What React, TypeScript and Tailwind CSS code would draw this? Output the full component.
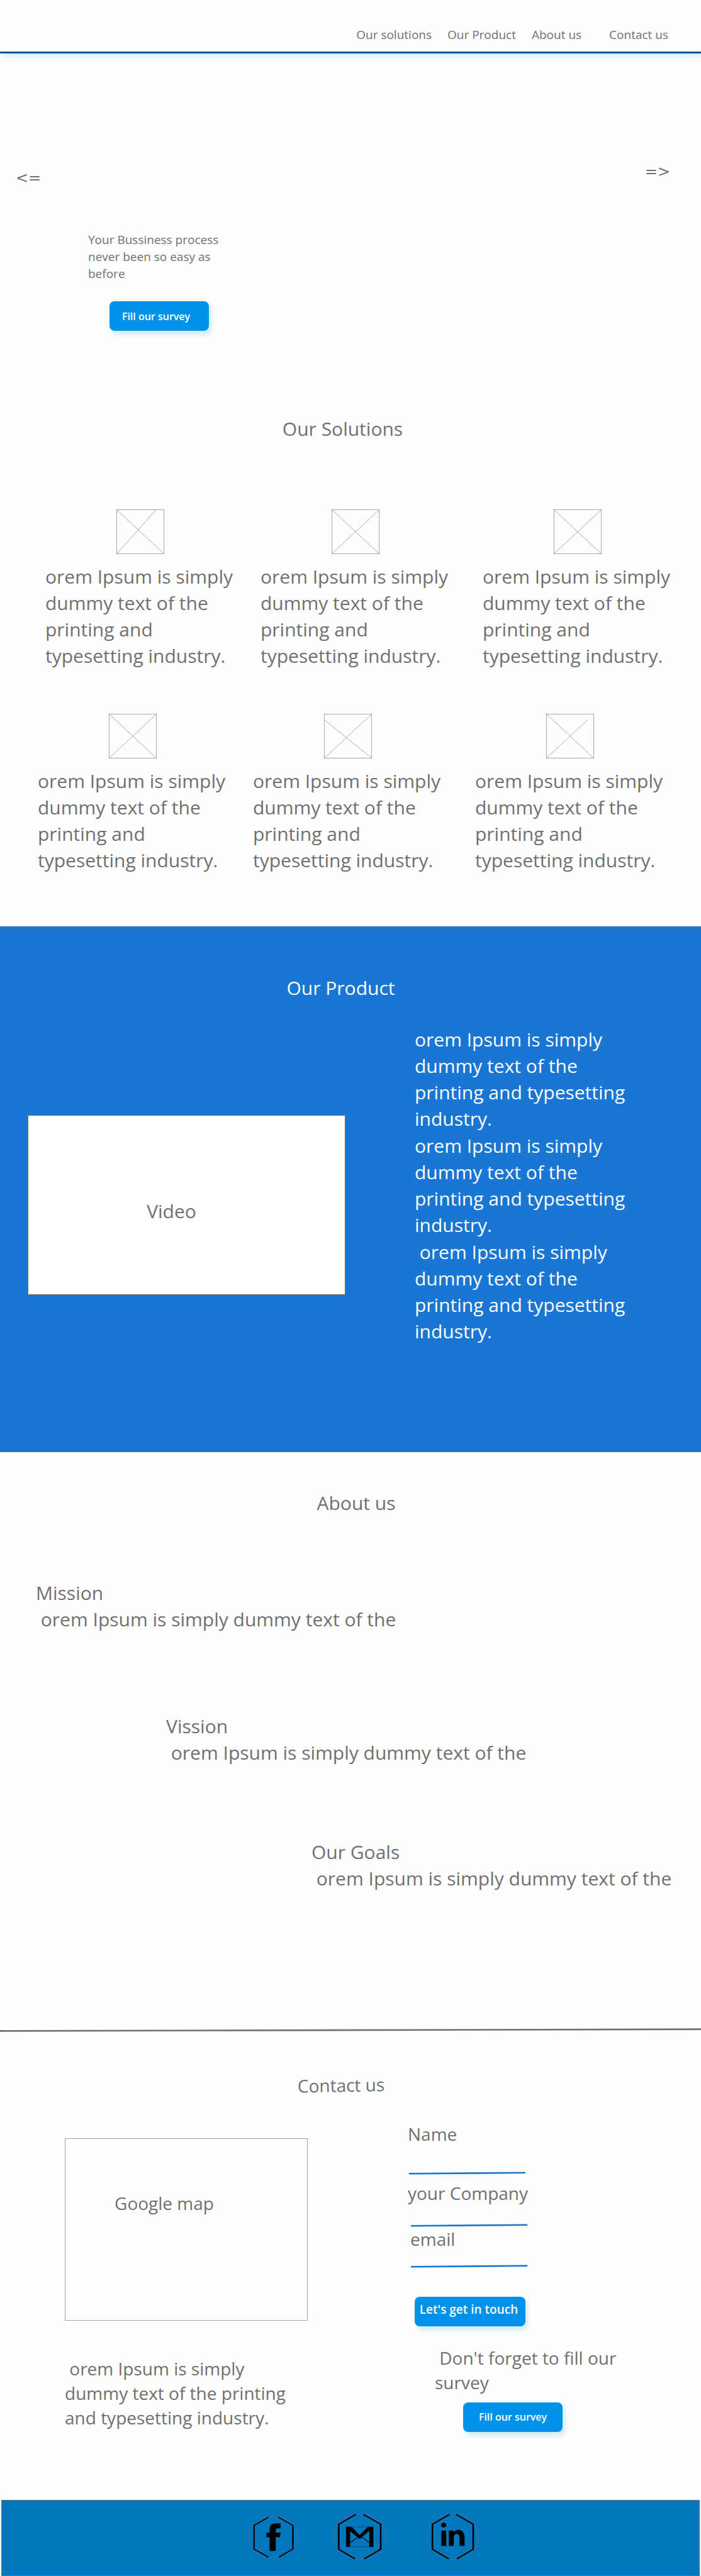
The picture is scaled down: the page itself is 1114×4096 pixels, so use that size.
import React from "react";

const LOREM = "orem Ipsum is simply dummy text of the printing and typesetting industry.";
const SHADOW = "shadow-[4px_6px_8px_rgba(0,145,234,0.18)]";

function SectionTitle({ className, children }: { className: string; children: React.ReactNode }) {
  return <h2 className={`text-center text-[30px] leading-[42px] ${className}`}>{children}</h2>;
}

const CROSS = "M0.5 0.5 75.5 70.5M0.5 70.5 75.5 0.5";

function Placeholder({ cross }: { cross: string }) {
  return (
    <svg className="ml-[113px] h-[71px] w-[76px]" viewBox="0 0 76 71" fill="none" stroke="#707070" strokeWidth="0.6" aria-hidden="true">
      <rect x="0.5" y="0.5" width="75" height="70" />
      <path d={cross} />
    </svg>
  );
}

function SolutionRow({ className, crosses }: { className: string; crosses: string[] }) {
  return (
    <div className={`grid grid-cols-[342fr_353fr_347fr] ${className}`}>
      {crosses.map((cross, i) => (
        <article key={i}>
          <Placeholder cross={cross} />
          <p className="mt-[15px] max-w-[310px] text-[30px] leading-[42px]">{LOREM}</p>
        </article>
      ))}
    </div>
  );
}

function AboutItem({ title, className }: { title: string; className: string }) {
  return (
    <article className={`text-[30px] leading-[42px] ${className}`}>
      <h3>{title}</h3>
      <p className="whitespace-pre">{" orem Ipsum is simply dummy text of the"}</p>
    </article>
  );
}

function SurveyButton({ className }: { className: string }) {
  return (
    <button
      type="button"
      className={`block h-[47px] w-[158px] rounded-lg bg-[#0091ea] text-[16px] font-semibold text-white ${SHADOW} ${className}`}
    >
      Fill our survey
    </button>
  );
}

function Field({
  id,
  label,
  type,
  className,
  inputClass,
  lineClass,
}: {
  id: string;
  label: string;
  type: string;
  className: string;
  inputClass: string;
  lineClass: string;
}) {
  return (
    <div className={className}>
      <label htmlFor={id} className="block text-[28px] leading-[39px]">
        {label}
      </label>
      <div className={`w-[185px] ${lineClass}`}>
        <input id={id} type={type} className={`block w-full bg-transparent text-base outline-none ${inputClass}`} />
        <svg className="block h-[5px] w-full" viewBox="0 0 185 5" preserveAspectRatio="none" aria-hidden="true">
          <path d="M0 3.2 185 1.8" stroke="#1976d2" strokeWidth="2.6" />
        </svg>
      </div>
    </div>
  );
}

function FacebookIcon() {
  return (
    <svg className="h-[66px] w-[79px]" viewBox="47 161 316 342" preserveAspectRatio="none" fill="none" aria-hidden="true">
      <ellipse cx="205" cy="332" rx="156" ry="170" stroke="#707070" strokeWidth="3" />
      <path d="M174 168 82 237V431L172 498M236 168 329 237V431L240 498" stroke="#000" strokeWidth="9" />
      <path
        d="M181 447V333H161V296H181V262Q181 219 219 219H250V261H232Q220 261 220 273V296H250L247 333H220V447Z"
        fill="#000"
      />
    </svg>
  );
}

function GmailIcon() {
  return (
    <svg className="h-[73px] w-[85px]" viewBox="581 143 338 379" preserveAspectRatio="none" fill="none" aria-hidden="true">
      <ellipse cx="750" cy="332.5" rx="167" ry="188" stroke="#707070" strokeWidth="3" />
      <path d="M727 148 618 230V437L721 516M774 148 883 230V437L779 516" stroke="#000" strokeWidth="10" />
      <path d="M664 249H699L750 320 803 249H837V417H811V284L750 352 690 287V417H664Z" fill="#000" />
      <path d="M690 382 740 334M812 382 762 334" stroke="#000" strokeWidth="5" />
      <path d="M690 252H811M690 416H811" stroke="#004a77" strokeWidth="5" />
    </svg>
  );
}

function LinkedInIcon() {
  return (
    <svg className="h-[73px] w-[83px]" viewBox="1171 143 333 379" preserveAspectRatio="none" fill="none" aria-hidden="true">
      <ellipse cx="1337.5" cy="332.5" rx="165" ry="188" stroke="#707070" strokeWidth="3" />
      <path d="M1317 148 1208 230V437L1312 516M1359 148 1468 230V437L1364 516" stroke="#000" strokeWidth="10" />
      <ellipse cx="1280" cy="237" rx="16" ry="20" fill="#000" />
      <path
        d="M1265 282H1296V409H1265ZM1313 282H1343V298Q1354 276 1374 276Q1412 280 1413 345V409H1381V340Q1380 309 1362 309Q1344 311 1344 345V409H1313Z"
        fill="#000"
      />
    </svg>
  );
}

export default function App() {
  return (
    <div className="w-full overflow-hidden bg-[#fefefe] font-['Open_Sans','Noto_Sans',sans-serif] text-[#707070]">
      <header className="flex justify-end border-b-[3px] border-[#01579b] pt-[42px] pr-[52px] pb-[13px] shadow-[4px_4px_8px_rgba(0,145,234,0.18)]">
        <nav className="flex gap-[25px] text-[19px] leading-[27px]">
          <a href="#solutions">Our solutions</a>
          <a href="#product">Our Product</a>
          <a href="#about">About us</a>
          <a href="#contact" className="ml-[19px]">
            Contact us
          </a>
        </nav>
      </header>

      <section className="pt-[173px]">
        <div className="flex items-start justify-between pr-[49px] pl-[25px] font-['DejaVu_Sans',sans-serif] text-[24px] leading-[30px]">
          <button type="button" aria-label="Previous slide" className="mt-[10px]">
            {"<="}
          </button>
          <button type="button" aria-label="Next slide">
            {"=>"}
          </button>
        </div>
        <p className="mt-[70px] ml-[140px] w-[220px] text-[19px] leading-[27px]">
          Your Bussiness process never been so easy as before
        </p>
        <SurveyButton className="mt-[30px] ml-[174px] pr-[10px]" />
      </section>

      <section id="solutions" className="pt-[135px] pb-[84px]">
        <SectionTitle className="pr-[25px]">Our Solutions</SectionTitle>
        <SolutionRow
          className="mt-[107px] pl-[72px]"
          crosses={["M0.5 0.5 75.5 70.5M0.5 70.5 63 0.5", CROSS, CROSS]}
        />
        <SolutionRow
          className="mt-[71px] pr-3 pl-[60px]"
          crosses={[CROSS, "M0.5 9.5 75.5 70.5M0.5 70.5 75.5 0.5", "M0.5 0.5 75.5 70.5M0.5 70.5 66 9.5"]}
        />
      </section>

      <section id="product" className="bg-[#1976d2] pt-[77px] pb-[171px] text-white">
        <SectionTitle className="pr-[31px]">Our Product</SectionTitle>
        <div className="mt-[40px] grid grid-cols-[505fr_455fr] items-start gap-[110px] pl-[44px]">
          <div className="mt-[141px] flex h-[286px] items-center justify-center border border-[#707070] bg-white pt-5 pr-[48px] text-[30px] leading-[42px] text-[#707070]">
            Video
          </div>
          <div className="flex max-w-[370px] flex-col gap-px text-[30px] leading-[42px] whitespace-pre-wrap">
            <p>{LOREM}</p>
            <p>{LOREM}</p>
            <p>{" " + LOREM}</p>
          </div>
        </div>
      </section>

      <section id="about" className="pt-[60px]">
        <SectionTitle className="pl-[18px]">About us</SectionTitle>
        <AboutItem title="Mission" className="mt-[101px] pl-[57px]" />
        <AboutItem title="Vission" className="mt-[128px] pl-[264px]" />
        <AboutItem title="Our Goals" className="mt-[116px] pl-[495px]" />
        <svg className="mt-[217px] block h-[6px] w-full" viewBox="0 0 1114 6" preserveAspectRatio="none" aria-hidden="true">
          <path d="M0 4.4 1114 1.6" stroke="#707070" strokeWidth="2.6" />
        </svg>
      </section>

      <section id="contact" className="pt-[65px] pb-[108px] text-[28px] leading-[39px]">
        <h2 className="-rotate-1 pr-[30px] text-center">Contact us</h2>
        <div className="mt-[39px] grid grid-cols-[386fr_466fr] gap-[159px] pl-[103px]">
          <div className="pt-[26px]">
            <div className="h-[290px] border border-[#a0a0a0] pt-[83px] pr-[70px] text-center">Google map</div>
            <p className="mt-[57px] max-w-[370px] whitespace-pre-wrap">{" " + LOREM}</p>
          </div>
          <div>
            <form>
              <Field id="name" label="Name" type="text" className="" inputClass="h-[40px]" lineClass="ml-[2px]" />
              <Field id="company" label="your Company" type="text" className="mt-[10px]" inputClass="h-[29px]" lineClass="ml-[5px]" />
              <Field id="email" label="email" type="email" className="pl-[4px]" inputClass="h-[21px]" lineClass="ml-[1px]" />
              <button
                type="submit"
                className={`mt-[46px] ml-[11px] block h-[47px] w-[176px] rounded-lg bg-[#0091ea] pr-[4px] pb-[7px] text-[19px] leading-[27px] font-semibold whitespace-nowrap text-white ${SHADOW}`}
              >
                Let's get in touch
              </button>
            </form>
            <p className="mt-[31px] ml-[43px] max-w-[310px] whitespace-pre-wrap">{" Don't forget to fill our survey"}</p>
            <SurveyButton className="mt-[12px] ml-[88px]" />
          </div>
        </div>
      </section>

      <footer className="mx-0.5 flex h-[121px] items-center justify-center gap-[55px] border border-[#707070] bg-[#0277bd] pb-1 pl-[42px]">
        <a href="#facebook" aria-label="Facebook">
          <FacebookIcon />
        </a>
        <a href="#gmail" aria-label="Gmail">
          <GmailIcon />
        </a>
        <a href="#linkedin" aria-label="LinkedIn" className="ml-[9px]">
          <LinkedInIcon />
        </a>
      </footer>
    </div>
  );
}
